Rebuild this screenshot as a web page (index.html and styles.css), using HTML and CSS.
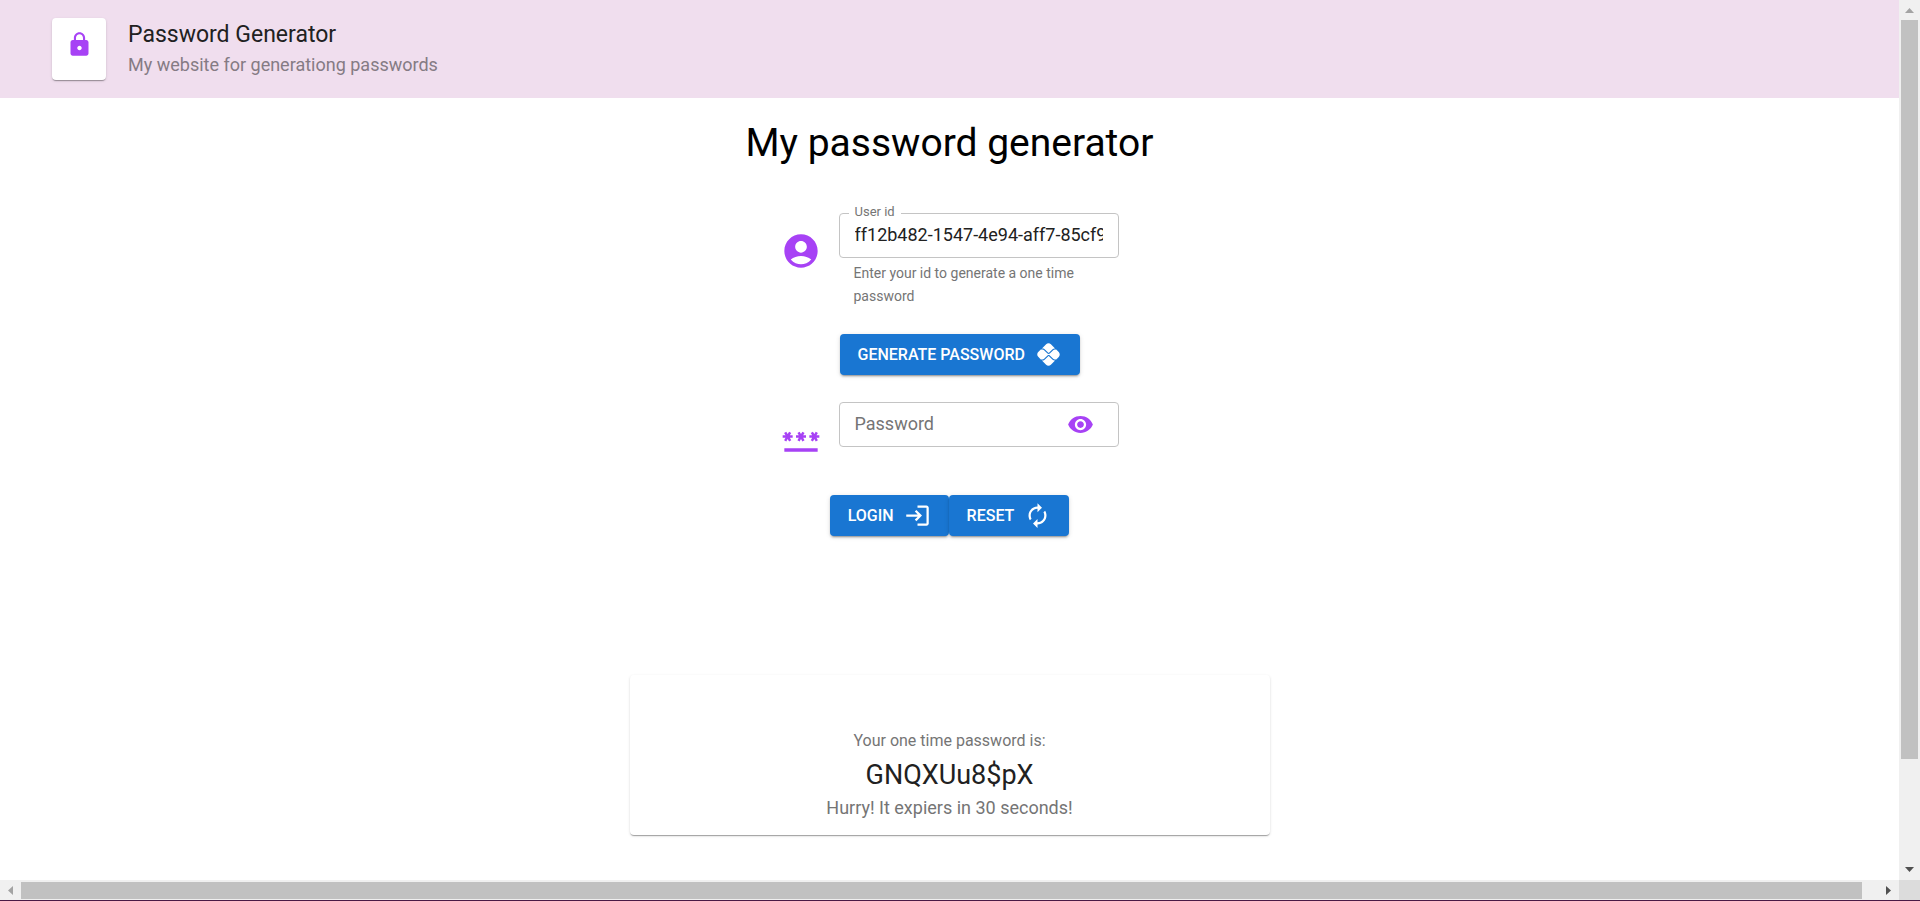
FILE: index.html
```html
<!DOCTYPE html>
<html lang="en">
<head>
<meta charset="utf-8">
<title>Password Generator</title>
<link rel="stylesheet" href="styles.css">
</head>
<body>
<div class="window">
  <div class="page">
    <header class="header">
      <div class="logo">
        <svg class="icon icon-sm" viewBox="0 0 24 24"><path d="M18 8h-1V6c0-2.760-2.240-5-5-5S7 3.240 7 6v2H6c-1.100 0-2 .9-2 2v10c0 1.100.9 2 2 2h12c1.100 0 2-.9 2-2V10c0-1.100-.9-2-2-2zm-6 9c-1.100 0-2-.9-2-2s.9-2 2-2 2 .9 2 2-.9 2-2 2zm3.100-9H8.900V6c0-1.710 1.390-3.100 3.100-3.100s3.100 1.390 3.100 3.100v2z"/></svg>
      </div>
      <div class="heading">
        <p class="brand">Password Generator</p>
        <p class="tagline">My website for generationg passwords</p>
      </div>
    </header>
    <main class="main">
      <h1 class="title">My password generator</h1>
      <form class="form">
        <div class="row row-user">
          <svg class="icon icon-lg" viewBox="0 0 24 24"><path d="M12 2C6.480 2 2 6.480 2 12s4.480 10 10 10 10-4.480 10-10S17.520 2 12 2zm0 4c1.930 0 3.500 1.570 3.500 3.500S13.930 13 12 13s-3.500-1.570-3.500-3.500S10.070 6 12 6zm0 14c-2.030 0-4.430-.82-6.140-2.880C7.550 15.800 9.680 15 12 15s4.450.8 6.140 2.120C16.430 19.180 14.030 20 12 20z"/></svg>
          <div class="field">
            <div class="control">
              <label class="float-label" for="user">User id</label>
              <input class="input" id="user" type="text" value="ff12b482-1547-4e94-aff7-85cf9a1b2c3d">
            </div>
            <p class="helper">Enter your id to generate a one time password</p>
          </div>
        </div>
        <button class="button button-generate" type="button">Generate password
          <svg class="icon-sm" viewBox="0 0 24 24"><path d="M15.450 16.520l-3.010-3.010c-.11-.11-.24-.13-.31-.13s-.2.020-.31.130L8.800 16.530c-.34.340-.87.890-2.640.89l3.710 3.700c1.170 1.170 3.070 1.170 4.240 0l3.720-3.710c-.91 0-1.670-.18-2.380-.89zM8.800 7.470l3.020 3.020c.08.080.2.130.31.130s.23-.05.31-.13l2.990-2.990c.71-.74 1.520-.91 2.430-.91l-3.720-3.710c-1.170-1.170-3.070-1.170-4.240 0l-3.710 3.700c1.760 0 2.300.58 2.610.89z"/><path d="M21.110 9.850l-2.250-2.260H17.600c-.54 0-1.080.22-1.450.61l-3 3c-.28.280-.65.420-1.020.42-.36 0-.74-.15-1.020-.42L8.090 8.170c-.38-.38-.9-.6-1.450-.6H5.170l-2.290 2.300c-1.170 1.170-1.170 3.070 0 4.240l2.290 2.300h1.480c.54 0 1.060-.22 1.450-.6l3.020-3.020c.28-.28.650-.42 1.020-.42s.74.140 1.020.42l3.010 3.010c.38.38.9.6 1.450.6h1.260l2.250-2.260c1.160-1.180 1.160-3.100-.02-4.290z"/></svg>
        </button>
        <div class="row row-password">
          <svg class="icon icon-lg" viewBox="0 0 24 24"><path d="M2 17h20v2H2v-2zm1.150-4.050L4 11.470l.85 1.480 1.300-.75-.85-1.480H7v-1.500H5.300l.85-1.470L4.850 7 4 8.470 3.150 7l-1.300.75.850 1.470H1v1.500h1.700l-.85 1.480 1.300.75zm6.700-.75 1.300.75.85-1.480.85 1.480 1.300-.75-.85-1.480H15v-1.500h-1.700l.85-1.470-1.300-.75L12 8.470 11.150 7l-1.300.75.85 1.470H9v1.500h1.700l-.85 1.480zM23 9.220h-1.700l.85-1.470-1.300-.75L20 8.470 19.150 7l-1.300.75.85 1.470H17v1.500h1.700l-.85 1.480 1.300.75.85-1.480.85 1.480 1.300-.75-.85-1.480H23v-1.500z"/></svg>
          <div class="field control">
            <input class="input" id="password" type="password" placeholder="Password" aria-label="Password">
            <button class="eye" type="button" aria-label="Show password"><svg class="icon icon-sm" viewBox="0 0 24 24"><path d="M12 4.500C7 4.500 2.730 7.610 1 12c1.730 4.390 6 7.500 11 7.500s9.270-3.110 11-7.500c-1.730-4.390-6-7.500-11-7.500zM12 17c-2.760 0-5-2.240-5-5s2.240-5 5-5 5 2.240 5 5-2.240 5-5 5zm0-8c-1.660 0-3 1.340-3 3s1.340 3 3 3 3-1.340 3-3-1.340-3-3-3z"/></svg></button>
          </div>
        </div>
        <div class="actions">
          <button class="button" type="button">Login
            <svg class="icon-sm" viewBox="0 0 24 24"><path d="M11 7 9.600 8.400l2.600 2.600H2v2h10.200l-2.600 2.600L11 17l5-5-5-5zm9 12h-8v2h8c1.100 0 2-.9 2-2V5c0-1.100-.9-2-2-2h-8v2h8v14z"/></svg>
          </button>
          <button class="button" type="button">Reset
            <svg class="icon-sm" viewBox="0 0 24 24"><path d="M12 6v3l4-4-4-4v3c-4.420 0-8 3.580-8 8 0 1.570.46 3.030 1.240 4.260L6.700 14.800c-.45-.83-.7-1.790-.7-2.800 0-3.310 2.690-6 6-6zm6.760 1.740L17.300 9.200c.44.840.7 1.790.7 2.800 0 3.310-2.690 6-6 6v-3l-4 4 4 4v-3c4.420 0 8-3.580 8-8 0-1.570-.46-3.030-1.240-4.260z"/></svg>
          </button>
        </div>
      </form>
      <section class="card">
        <p class="card-label">Your one time password is:</p>
        <p class="card-password">GNQXUu8$pX</p>
        <p class="card-note">Hurry! It expiers in 30 seconds!</p>
      </section>
    </main>
  </div>
  <div class="bar bar-v">
    <svg class="arrow-v" viewBox="0 0 9 5"><path fill="#a3a3a3" d="M0 5 4.500 0 9 5z"/></svg>
    <div class="track-v"><div class="thumb thumb-v"></div></div>
    <svg class="arrow-v" viewBox="0 0 9 5"><path fill="#505050" d="M0 0h9L4.500 5z"/></svg>
  </div>
  <div class="bar bar-h">
    <svg class="arrow-h" viewBox="0 0 5 9"><path fill="#a3a3a3" d="M5 0v9L0 4.500z"/></svg>
    <div class="track-h"><div class="thumb thumb-h"></div></div>
    <svg class="arrow-h" viewBox="0 0 5 9"><path fill="#505050" d="M0 0v9l5-4.500z"/></svg>
  </div>
  <div class="corner"></div>
  <div class="edge"></div>
</div>
</body>
</html>
```
FILE: styles.css
```css
* { box-sizing: border-box; }
body {
  margin: 0;
  background: #fff;
  color: #212121;
  font-family: Roboto, "Liberation Sans", sans-serif;
}
p, h1 { margin: 0; font-weight: 400; }
button, input { font-family: inherit; }

.window {
  display: grid;
  grid-template-columns: 1fr 21px;
  grid-template-rows: 1fr 20px 1px;
  height: 100vh;
  overflow: hidden;
}
.page { min-width: 0; overflow: hidden; }

.header {
  display: flex;
  align-items: center;
  gap: 22px;
  padding: 18px 52px;
  background: #f0deee;
}
.logo {
  display: flex;
  justify-content: center;
  width: 54px;
  height: 62px;
  padding-top: 13px;
  border-radius: 4px;
  background: #fff;
  box-shadow: 0 2px 1px -1px rgba(0,0,0,.2), 0 1px 1px rgba(0,0,0,.14), 0 1px 3px rgba(0,0,0,.12);
}
.heading { padding-top: 2px; }
.brand { font-size: 23px; line-height: 30px; }
.tagline { font-size: 18px; line-height: 30px; color: #857b84; }

.icon { fill: #a742f5; }
.icon-sm { width: 27px; height: 27px; flex: none; }
.icon-lg { width: 40px; height: 40px; flex: none; }

.main { display: flex; flex-direction: column; align-items: center; }
.title { padding-top: 20px; font-size: 39px; line-height: 50px; color: #000; }
.form { width: 338px; padding-top: 45px; }
.row { display: flex; gap: 18px; }
.row-user { align-items: center; }
.row-user .icon-lg { margin-bottom: 20px; }
.row-password { align-items: flex-start; }
.row-password .icon-lg { margin-top: 18px; }
.field { flex: 1; min-width: 0; }
.control {
  position: relative;
  display: flex;
  align-items: center;
  height: 45px;
  border: 1px solid #c4c4c4;
  border-radius: 4px;
}
.float-label {
  position: absolute;
  top: -10px;
  left: 9px;
  padding: 0 6px;
  background: #fff;
  font-size: 13px;
  line-height: 16px;
  color: #757575;
}
.input {
  width: 100%;
  min-width: 0;
  margin: 0 15px;
  padding: 0 0 2px;
  border: 0;
  outline: 0;
  background: none;
  font-size: 18px;
  line-height: 24px;
  color: #212121;
}
.input::placeholder { color: #757575; opacity: 1; }
.eye {
  display: flex;
  margin-right: 24px;
  padding: 0;
  border: 0;
  background: none;
}
.helper { padding: 4px 15px 0; font-size: 14px; line-height: 23px; color: #757575; }
.button {
  display: flex;
  gap: 10px;
  align-items: center;
  height: 41px;
  padding: 0 18px;
  border: 0;
  border-radius: 4px;
  background: #1976d2;
  color: #fff;
  fill: #fff;
  font-size: 16px;
  font-weight: 500;
  text-transform: uppercase;
  box-shadow: 0 3px 1px -2px rgba(0,0,0,.2), 0 2px 2px rgba(0,0,0,.14), 0 1px 5px rgba(0,0,0,.12);
}
.button-generate { margin: 26px 0 27px 59px; }
.actions { display: flex; justify-content: center; padding-top: 35px; }

.card {
  width: 640px;
  max-width: 100%;
  margin-top: 139px;
  padding: 54px 16px 12px;
  border-radius: 4px;
  text-align: center;
  color: #757575;
  box-shadow: 0 2px 1px -1px rgba(0,0,0,.2), 0 1px 1px rgba(0,0,0,.14), 0 1px 3px rgba(0,0,0,.12);
}
.card-label { font-size: 16px; line-height: 24px; }
.card-password { padding-top: 4px; font-size: 27px; line-height: 36px; color: #212121; }
.card-note { font-size: 18px; line-height: 30px; }

.bar { display: flex; align-items: center; background: #f0f0f0; }
.bar-v { flex-direction: column; padding: 8px 0; gap: 7px; }
.bar-h { grid-column: 1; padding: 0 8px; gap: 8px; }
.arrow-v { width: 9px; height: 5px; flex: none; }
.arrow-h { width: 5px; height: 9px; flex: none; }
.track-v { flex: 1; width: 17px; }
.track-h { flex: 1; height: 17px; }
.thumb { background: #c1c1c1; }
.thumb-v { width: 17px; height: 88%; }
.thumb-h { width: calc(100% - 16px); height: 17px; }
.corner { background: #dcdcdc; }
.edge { grid-column: 1 / -1; background: #4a1a45; }
```
